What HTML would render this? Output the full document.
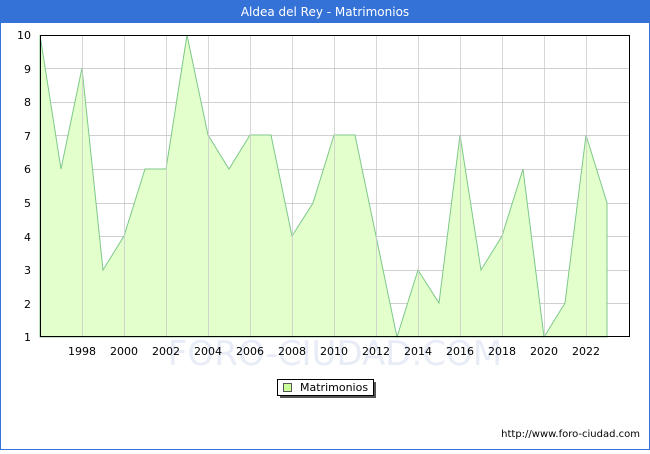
<!DOCTYPE html>
<html><head><style>
body{margin:0;width:650px;height:450px;overflow:hidden;background:#fff;font-family:"DejaVu Sans","Liberation Sans",sans-serif;}
</style></head><body>
<svg width="650" height="450" xmlns="http://www.w3.org/2000/svg" font-family="DejaVu Sans, Liberation Sans, sans-serif">
<rect x="0.5" y="0.5" width="649" height="449" fill="#fff" stroke="#3572d8"/>
<rect x="0" y="0" width="650" height="23" fill="#3572d8"/>
<text x="325" y="16" fill="#fff" font-size="12" text-anchor="middle">Aldea del Rey - Matrimonios</text>
<text x="335" y="365" fill="#e8ecf6" font-size="34" text-anchor="middle">FORO-CIUDAD.COM</text>
<g stroke="#d0d0d0" stroke-width="1">
<line x1="40" y1="68.5" x2="630" y2="68.5"/><line x1="40" y1="102.5" x2="630" y2="102.5"/>
<line x1="40" y1="135.5" x2="630" y2="135.5"/><line x1="40" y1="169.5" x2="630" y2="169.5"/>
<line x1="40" y1="203.5" x2="630" y2="203.5"/><line x1="40" y1="236.5" x2="630" y2="236.5"/>
<line x1="40" y1="270.5" x2="630" y2="270.5"/><line x1="40" y1="303.5" x2="630" y2="303.5"/>
</g>
<polygon fill="#e2ffcc" stroke="#7ec88a" stroke-width="1" points="40,337 40,35 61,169 82,68 103,270 124,236 145,169 166,169 187,35 208,135 229,169 250,135 271,135 292,236 313,203 334,135 355,135 376,236 397,337 418,270 439,303 460,135 481,270 502,236 523,169 544,337 565,303 586,135 607,203 607,337"/>
<g stroke="#cccccc" stroke-width="1" opacity="0.8">
<line x1="82.5" y1="35" x2="82.5" y2="337"/><line x1="124.5" y1="35" x2="124.5" y2="337"/>
<line x1="166.5" y1="35" x2="166.5" y2="337"/><line x1="208.5" y1="35" x2="208.5" y2="337"/>
<line x1="250.5" y1="35" x2="250.5" y2="337"/><line x1="292.5" y1="35" x2="292.5" y2="337"/>
<line x1="334.5" y1="35" x2="334.5" y2="337"/><line x1="376.5" y1="35" x2="376.5" y2="337"/>
<line x1="418.5" y1="35" x2="418.5" y2="337"/><line x1="460.5" y1="35" x2="460.5" y2="337"/>
<line x1="502.5" y1="35" x2="502.5" y2="337"/><line x1="544.5" y1="35" x2="544.5" y2="337"/>
<line x1="586.5" y1="35" x2="586.5" y2="337"/>
</g>
<rect x="40.5" y="35.5" width="589" height="301" fill="none" stroke="#000"/>
<g font-size="11" fill="#000" text-anchor="end">
<text x="31" y="39">10</text><text x="31" y="73">9</text><text x="31" y="106">8</text>
<text x="31" y="140">7</text><text x="31" y="173">6</text><text x="31" y="207">5</text>
<text x="31" y="241">4</text><text x="31" y="274">3</text><text x="31" y="308">2</text><text x="31" y="341">1</text>
</g>
<g font-size="11" fill="#000" text-anchor="middle">
<text x="82" y="355">1998</text><text x="124" y="355">2000</text><text x="166" y="355">2002</text>
<text x="208" y="355">2004</text><text x="250" y="355">2006</text><text x="292" y="355">2008</text>
<text x="334" y="355">2010</text><text x="376" y="355">2012</text><text x="418" y="355">2014</text>
<text x="460" y="355">2016</text><text x="502" y="355">2018</text><text x="544" y="355">2020</text>
<text x="586" y="355">2022</text>
</g>
<rect x="280" y="382" width="96" height="16" fill="#555"/>
<rect x="277.5" y="379.5" width="96" height="16" fill="#fff" stroke="#000"/>
<rect x="283.5" y="383.5" width="8" height="8" fill="#ccff99" stroke="#555"/>
<text x="300" y="391" font-size="11" fill="#000">Matrimonios</text>
<text x="640" y="437" font-size="10" fill="#000" text-anchor="end">http://www.foro-ciudad.com</text>
</svg>
</body></html>
